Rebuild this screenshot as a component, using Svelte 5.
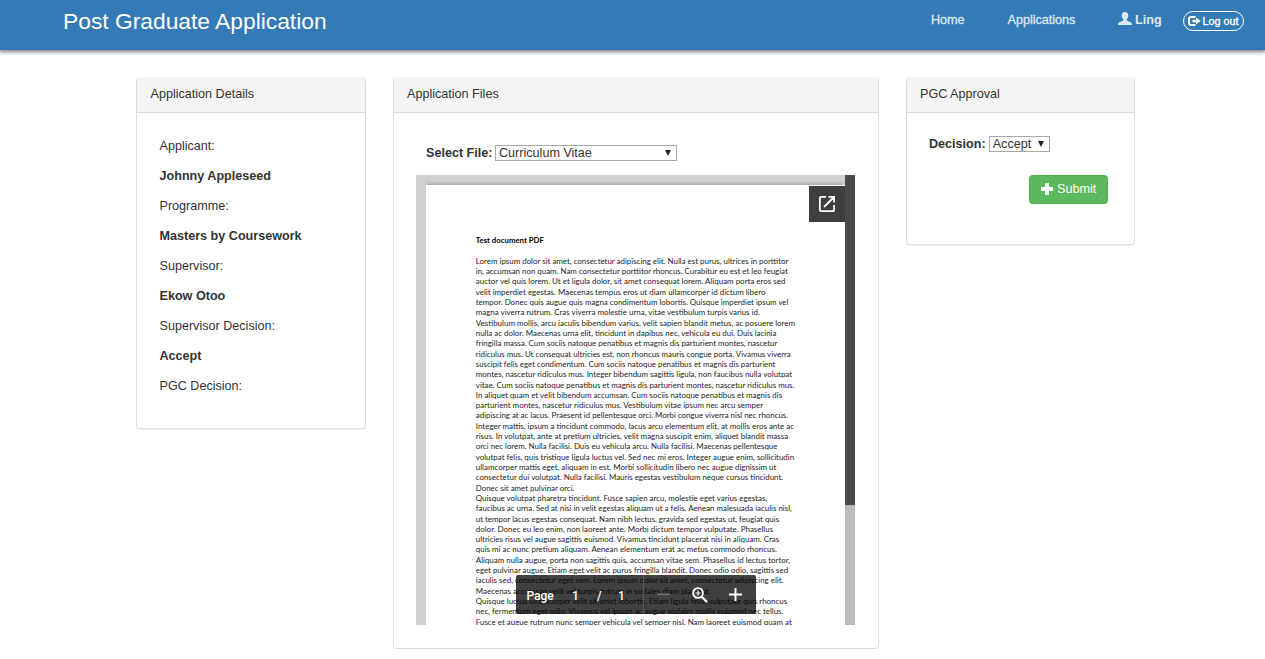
<script>
  const details = [
    { text: 'Applicant:' },
    { text: 'Johnny Appleseed', strong: true },
    { text: 'Programme:' },
    { text: 'Masters by Coursework', strong: true },
    { text: 'Supervisor:' },
    { text: 'Ekow Otoo', strong: true },
    { text: 'Supervisor Decision:' },
    { text: 'Accept', strong: true },
    { text: 'PGC Decision:' }
  ];

  // Each document line with its set width in pixels.
  const lines = [
    ['Lorem ipsum dolor sit amet, consectetur adipiscing elit. Nulla est purus, ultrices in porttitor', 312.6],
    ['in, accumsan non quam. Nam consectetur porttitor rhoncus. Curabitur eu est et leo feugiat', 312],
    ['auctor vel quis lorem. Ut et ligula dolor, sit amet consequat lorem. Aliquam porta eros sed', 309.6],
    ['velit imperdiet egestas. Maecenas tempus eros ut diam ullamcorper id dictum libero', 289.6],
    ['tempor. Donec quis augue quis magna condimentum lobortis. Quisque imperdiet ipsum vel', 312.6],
    ['magna viverra rutrum. Cras viverra molestie urna, vitae vestibulum turpis varius id.', 284],
    ['Vestibulum mollis, arcu iaculis bibendum varius, velit sapien blandit metus, ac posuere lorem', 319.3],
    ['nulla ac dolor. Maecenas urna elit, tincidunt in dapibus nec, vehicula eu dui. Duis lacinia', 300.6],
    ['fringilla massa. Cum sociis natoque penatibus et magnis dis parturient montes, nascetur', 301.6],
    ['ridiculus mus. Ut consequat ultricies est, non rhoncus mauris congue porta. Vivamus viverra', 315],
    ['suscipit felis eget condimentum. Cum sociis natoque penatibus et magnis dis parturient', 299.6],
    ['montes, nascetur ridiculus mus. Integer bibendum sagittis ligula, non faucibus nulla volutpat', 316.3],
    ['vitae. Cum sociis natoque penatibus et magnis dis parturient montes, nascetur ridiculus mus.', 318.6],
    ['In aliquet quam et velit bibendum accumsan. Cum sociis natoque penatibus et magnis dis', 306.3],
    ['parturient montes, nascetur ridiculus mus. Vestibulum vitae ipsum nec arcu semper', 287.3],
    ['adipiscing at ac lacus. Praesent id pellentesque orci. Morbi congue viverra nisl nec rhoncus.', 312.3],
    ['Integer mattis, ipsum a tincidunt commodo, lacus arcu elementum elit, at mollis eros ante ac', 318.3],
    ['risus. In volutpat, ante at pretium ultricies, velit magna suscipit enim, aliquet blandit massa', 312.3],
    ['orci nec lorem. Nulla facilisi. Duis eu vehicula arcu. Nulla facilisi. Maecenas pellentesque', 301.6],
    ['volutpat felis, quis tristique ligula luctus vel. Sed nec mi eros. Integer augue enim, sollicitudin', 318.3],
    ['ullamcorper mattis eget, aliquam in est. Morbi sollicitudin libero nec augue dignissim ut', 300.6],
    ['consectetur dui volutpat. Nulla facilisi. Mauris egestas vestibulum neque cursus tincidunt.', 307.3],
    ['Donec sit amet pulvinar orci.', 98.6],
    ['Quisque volutpat pharetra tincidunt. Fusce sapien arcu, molestie eget varius egestas,', 291.3],
    ['faucibus ac urna. Sed at nisi in velit egestas aliquam ut a felis. Aenean malesuada iaculis nisl,', 316],
    ['ut tempor lacus egestas consequat. Nam nibh lectus, gravida sed egestas ut, feugiat quis', 303.3],
    ['dolor. Donec eu leo enim, non laoreet ante. Morbi dictum tempor vulputate. Phasellus', 297.3],
    ['ultricies risus vel augue sagittis euismod. Vivamus tincidunt placerat nisi in aliquam. Cras', 303.3],
    ['quis mi ac nunc pretium aliquam. Aenean elementum erat ac metus commodo rhoncus.', 301],
    ['Aliquam nulla augue, porta non sagittis quis, accumsan vitae sem. Phasellus id lectus tortor,', 314.3],
    ['eget pulvinar augue. Etiam eget velit ac purus fringilla blandit. Donec odio odio, sagittis sed', 312.3],
    ['iaculis sed, consectetur eget sem. Lorem ipsum dolor sit amet, consectetur adipiscing elit.', 307.6],
    ['Maecenas accumsan velit vel turpis rutrum in sodales diam placerat.', 235],
    ['Quisque luctus ullamcorper velit sit amet lobortis. Etiam ligula felis, vulputate quis rhoncus', 311.3],
    ['nec, fermentum eget odio. Vivamus vel ipsum ac augue sodales mollis euismod nec tellus.', 307.6],
    ['Fusce et augue rutrum nunc semper vehicula vel semper nisl. Nam laoreet euismod quam at', 316]
  ];
</script>

<header>
  <h1>Post Graduate Application</h1>
  <nav>
    <a class="home" href="#home">Home</a>
    <a class="apps" href="#applications">Applications</a>
    <a class="user" href="#user">
      <svg width="14" height="13" viewBox="0 0 14 13"><path fill="currentColor" d="M7 0C9 0 10.4 1.3 10.3 3.6C10.2 5.3 9.6 6.4 8.8 7.2V8.5C10 9.3 13 9.9 13.6 11C13.9 11.6 14 12.2 14 13H0C0 12.2.1 11.6.4 11C1 9.9 4 9.3 5.2 8.5V7.2C4.4 6.4 3.8 5.3 3.7 3.6C3.6 1.3 5 0 7 0Z" /></svg>
      <span>Ling</span>
    </a>
    <button class="logout">
      <svg width="13" height="10" viewBox="0 0 13 10"><path fill="none" stroke="currentColor" stroke-width="2" d="M7.5 1H3Q1 1 1 3V7Q1 9 3 9H7.5" /><path fill="currentColor" d="M4.5 3.8H8V1.4L12.7 5L8 8.6V6.2H4.5Z" /></svg>
      <span>Log out</span>
    </button>
  </nav>
</header>

<main>
  <section class="panel details">
    <h2>Application Details</h2>
    <div class="body">
      {#each details as d}
        <p class:strong={d.strong}>{d.text}</p>
      {/each}
    </div>
  </section>

  <section class="panel files">
    <h2>Application Files</h2>
    <div class="row">
      <label for="file">Select File:</label>
      <span class="select wide">
        <select id="file"><option>Curriculum Vitae</option></select>
        <svg width="6" height="6" viewBox="0 0 6 6"><path fill="#222" d="M0 0H6L3 6Z" /></svg>
      </span>
    </div>
    <div class="viewer">
      <div class="canvas">
        <div class="sheet">
          <svg class="doc" width="419" height="440" viewBox="426 185 419 440">
            <text class="title" x="475.8" y="243.3" textLength="68" lengthAdjust="spacingAndGlyphs">Test document PDF</text>
            {#each lines as [text, width], i}
              <text x="475.8" y={263.8 + i * 10.31} textLength={width} lengthAdjust="spacingAndGlyphs">{text}</text>
            {/each}
          </svg>
        </div>
      </div>
      <div class="scroll"><div class="thumb"></div></div>
      <button class="open" aria-label="Open in new window">
        <svg width="16" height="16" viewBox="0 0 16 16"><path fill="none" stroke="#fff" stroke-width="1.8" d="M7 .9H2Q.9.9.9 2V14Q.9 15.1 2 15.1H14Q15.1 15.1 15.1 14V9M9.5.9H15.1V6.5M15 1L5 11" /></svg>
      </button>
      <div class="toolbar">
        <div class="pages"><span>Page</span><span>1</span><span>/</span><span>1</span></div>
        <div class="zoom">
          <svg width="13" height="16" viewBox="0 0 13 16"><path stroke="#777" stroke-width="1.5" d="M0 7.3H13" /></svg>
          <svg width="16" height="16" viewBox="0 0 16 16"><g fill="none" stroke="#fff"><circle cx="6" cy="6" r="4.9" stroke-width="1.9" /><path stroke-width="2.3" d="M9.7 9.7L15 15" /><path stroke-width="1.2" d="M3.5 6H8.5M6 3.5V8.5" /></g></svg>
          <svg width="13" height="16" viewBox="0 0 13 16"><path stroke="#fff" stroke-width="1.9" d="M0 7.5H13M6.5 1V14" /></svg>
        </div>
      </div>
    </div>
  </section>

  <section class="panel approval">
    <h2>PGC Approval</h2>
    <div class="row">
      <label for="decision">Decision:</label>
      <span class="select">
        <select id="decision"><option>Accept</option></select>
        <svg width="6" height="6" viewBox="0 0 6 6"><path fill="#222" d="M0 0H6L3 6Z" /></svg>
      </span>
    </div>
    <button class="submit">
      <svg width="12" height="12" viewBox="0 0 12 12"><path fill="#fff" d="M4 0H8V4H12V8H8V12H4V8H0V4H4Z" /></svg>
      <span>Submit</span>
    </button>
  </section>
</main>

<style>
  :global(body) {
    margin: 0;
    background: #fff;
    color: #333;
    font: 12.6px/18px 'Liberation Sans', Arial, sans-serif;
    overflow: hidden;
  }
  * { box-sizing: border-box; }
  svg { display: block; flex: none; }
  button, select { font: inherit; margin: 0; }
  header {
    display: flex;
    justify-content: space-between;
    height: 50px;
    padding: 0 21px 0 63px;
    background: #337ab7;
    box-shadow: 0 1px 4px 1px rgba(0, 0, 0, 0.5);
    color: #fff;
  }
  h1 { margin: 8px 0 0; font-size: 22.8px; line-height: 26px; font-weight: 400; }
  nav { display: flex; align-items: flex-start; }
  nav a { margin-top: 11px; color: #dfe9f3; text-decoration: none; -webkit-text-stroke: 0.3px; white-space: nowrap; }
  .home { width: 76.5px; }
  .apps { width: 110.5px; }
  .user { display: flex; align-items: flex-start; gap: 3px; width: 65px; font-weight: 700; -webkit-text-stroke: 0; }
  .user svg { margin-top: 1px; }
  .logout {
    display: flex;
    align-items: center;
    justify-content: center;
    gap: 1px;
    width: 61px;
    height: 20px;
    margin-top: 11px;
    padding: 0;
    border: 1px solid #fff;
    border-radius: 10px;
    background: transparent;
    color: #fff;
    font-size: 10.8px;
    white-space: nowrap;
    -webkit-text-stroke: 0.3px;
  }
  main { display: flex; align-items: flex-start; gap: 27px; padding: 27px 0 0 136px; }
  .panel {
    border: 1px solid #ddd;
    border-top-color: #f5f5f5;
    border-radius: 4px;
    box-shadow: 0 1px 1px rgba(0, 0, 0, 0.05);
  }
  h2 {
    height: 35px;
    margin: 0;
    padding: 7px 13px;
    border-bottom: 1px solid #ddd;
    background: #f5f5f5;
    font-size: 12.6px;
    font-weight: 400;
  }
  .details { width: 230px; height: 352px; }
  .details h2 { padding-left: 13.5px; }
  .body { padding: 24px 22.5px; }
  .body p { margin: 0 0 12px; }
  .strong, label { font-weight: 700; }
  .files { width: 486px; height: 572px; }
  .row { display: flex; align-items: center; gap: 3px; }
  .files .row { gap: 2.5px; padding: 31px 0 0 32px; height: 49px; }
  .approval { width: 229px; height: 168px; display: flex; flex-direction: column; }
  .approval .row { padding: 22px 0 0 22px; height: 40px; }
  .select { display: flex; align-items: center; justify-content: space-between; width: 61px; height: 16px; padding-right: 5px; border: 1px solid #a9a9a9; color: #333; }
  .wide { width: 182px; }
  select { appearance: none; border: 0; padding: 0 0 0 3px; background: transparent; color: inherit; height: 16px; line-height: 16px; outline: 0; }
  .submit {
    display: flex;
    align-items: center;
    align-self: flex-end;
    gap: 4px;
    width: 79px;
    height: 29px;
    margin: 22px 26px 0 0;
    padding: 0 0 2px 11px;
    border: 1px solid #4cae4c;
    border-radius: 3.6px;
    background: #5cb85c;
    color: #fff;
  }
  .viewer { position: relative; display: flex; width: 439px; height: 450px; margin: 13px 0 0 22px; overflow: hidden; }
  .canvas { flex: 1; padding: 10px 0 0 10px; background: #d1d1d1; }
  .sheet { height: 440px; background: #fff; box-shadow: 0 0 5px rgba(0, 0, 0, 0.35); clip-path: inset(-10px 0 0 0); }
  .doc text { font: 8.2px Lato, sans-serif; fill: #1c1c1c; }
  .doc .title { font-weight: 700; fill: #000; }
  .scroll { width: 10px; background: #bbb; z-index: 1; }
  .thumb { height: 330px; background: #4a4a4a; }
  .open {
    position: absolute;
    top: 11px;
    right: 10px;
    width: 36px;
    height: 36px;
    padding: 0 0 0 10px;
    border: 0;
    background: #3f3f3f;
  }
  .toolbar {
    position: absolute;
    left: 100px;
    top: 400px;
    display: flex;
    width: 240px;
    height: 39px;
    border-radius: 2px;
    background: rgba(0, 0, 0, 0.75);
    color: #fff;
    font: 500 12px/18px Roboto, sans-serif;
  }
  .pages { display: flex; align-items: center; width: 128px; padding: 3px 0 0 10.5px; border-right: 1px solid #555; }
  .pages span:nth-child(1) { width: 45.5px; }
  .pages span:nth-child(2) { width: 25px; }
  .pages span:nth-child(3) { width: 21px; }
  .zoom { display: flex; align-items: center; gap: 21.5px; padding-left: 13px; }
</style>
